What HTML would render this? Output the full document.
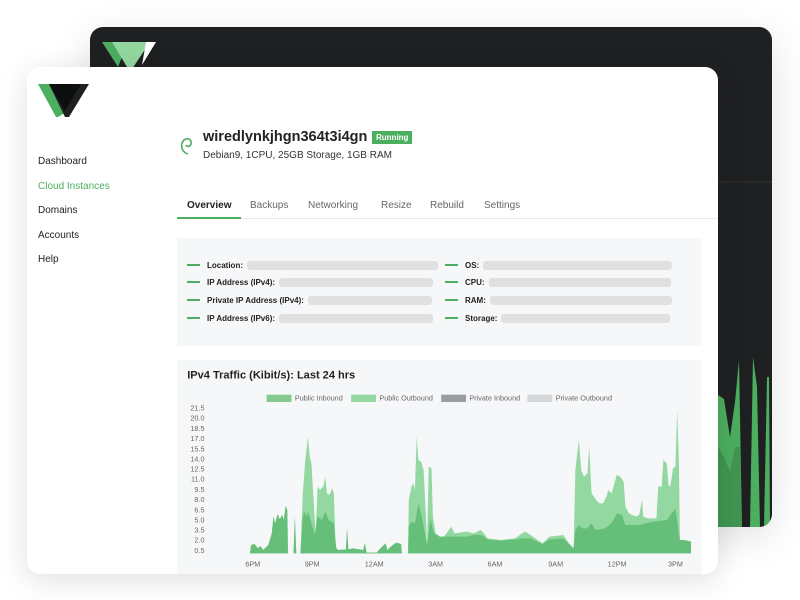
<!DOCTYPE html>
<html><head><meta charset="utf-8"><style>
*{margin:0;padding:0;box-sizing:border-box}
body{width:800px;height:600px;background:#fff;position:relative;overflow:hidden;font-family:"Liberation Sans",sans-serif;color:#222}
.dark{position:absolute;left:90px;top:27px;width:682px;height:500px;background:#1f2022;border-radius:13px;box-shadow:0 10px 40px rgba(0,0,0,.12);overflow:hidden}
.white{position:absolute;left:27px;top:67px;width:691px;height:507px;background:#fff;border-radius:13px;box-shadow:0 6px 30px rgba(0,0,0,.13);overflow:hidden}
.nav{position:absolute;left:11px;font-size:10px;color:#222}
.panel{position:absolute;left:150px;width:525px;background:#f6f7f9}
.row{position:absolute;font-size:8px;font-weight:bold;color:#222;display:flex;align-items:center;height:10px}
.row .d{width:13px;height:1.5px;background:#4cae5f;margin-right:7px}
.row .b{height:9px;background:#e0e0e0;border-radius:3px;margin-left:4px}
.tab{position:absolute;top:133px;font-size:10px;color:#666}
</style></head><body>
<div class="dark">
 <svg width="682" height="500" style="position:absolute;left:0;top:0">
  <polygon points="12,15 38,15 28,40" fill="#4cae5f"/>
  <polygon points="22,15 60,15 40,45" fill="#93d8a0"/>
  <polygon points="56,15 66,15 52,38" fill="#fff"/>
  <line x1="620" y1="155" x2="682" y2="155" stroke="#333" stroke-width="1"/>
  <polygon points="628,500 628,368 634,372 640,410 645,375 649,333 652,500 660,500 663,330 667,360 670,500 674,500 677,350 679,350 680,500" fill="#4cae5f"/>
  <polygon points="628,420 634,430 640,445 645,420 650,420 652,500 628,500" fill="#3d8a4c" opacity=".7"/>
 </svg>
</div>
<div class="white">
 <svg width="60" height="40" style="position:absolute;left:10px;top:14px">
  <polygon points="1,3 20,3 31,30 21,36 19,36" fill="#4cae5f"/>
  <polygon points="12,3 52,3 32,36 28,36" fill="#1f2022"/>
  <polygon points="12,3 44,3 28,30" fill="#0c0f0d"/>
 </svg>
 <div class="nav" style="top:89px">Dashboard</div>
 <div class="nav" style="top:114px;color:#4cae5f">Cloud Instances</div>
 <div class="nav" style="top:138px">Domains</div>
 <div class="nav" style="top:163px">Accounts</div>
 <div class="nav" style="top:187px">Help</div>
 <svg width="16" height="24" style="position:absolute;left:151px;top:67px"><path d="M10 20 C3 18 2 10 6 6 C10 3 14 6 13 10 C12 13 9 13 8 11" fill="none" stroke="#4cae5f" stroke-width="1.6"/></svg>
 <div style="position:absolute;left:176px;top:62px;font-size:14.5px;font-weight:bold;color:#222">wiredlynkjhgn364t3i4gn</div>
 <div style="position:absolute;left:345px;top:64px;background:#4cae5f;color:#fff;font-size:8px;font-weight:bold;padding:2px 4px">Running</div>
 <div style="position:absolute;left:176px;top:83px;font-size:10px;color:#333">Debian9, 1CPU, 25GB Storage, 1GB RAM</div>
 <div class="tab" style="left:160px;color:#222;font-weight:bold">Overview</div>
 <div class="tab" style="left:223px">Backups</div>
 <div class="tab" style="left:281px">Networking</div>
 <div class="tab" style="left:354px">Resize</div>
 <div class="tab" style="left:403px">Rebuild</div>
 <div class="tab" style="left:457px">Settings</div>
 <div style="position:absolute;left:150px;top:151px;width:541px;height:1px;background:#e8e8e8"></div>
 <div style="position:absolute;left:150px;top:150px;width:64px;height:2px;background:#4cae5f"></div>
 <div class="panel" style="top:171px;height:108px">
  <div class="row" style="left:10px;top:22px"><span class="d"></span>Location:<span class="b" style="width:191px"></span></div>
  <div class="row" style="left:10px;top:39px"><span class="d"></span>IP Address (IPv4):<span class="b" style="width:154px"></span></div>
  <div class="row" style="left:10px;top:57px"><span class="d"></span>Private IP Address (IPv4):<span class="b" style="width:124px"></span></div>
  <div class="row" style="left:10px;top:75px"><span class="d"></span>IP Address (IPv6):<span class="b" style="width:154px"></span></div>
  <div class="row" style="left:268px;top:22px"><span class="d"></span>OS:<span class="b" style="width:189px"></span></div>
  <div class="row" style="left:268px;top:39px"><span class="d"></span>CPU:<span class="b" style="width:182px"></span></div>
  <div class="row" style="left:268px;top:57px"><span class="d"></span>RAM:<span class="b" style="width:182px"></span></div>
  <div class="row" style="left:268px;top:75px"><span class="d"></span>Storage:<span class="b" style="width:169px"></span></div>
 </div>
 <div class="panel" style="top:293px;height:220px"></div>
</div>
<svg width="800" height="600" style="position:absolute;left:0;top:0">
 <g transform="translate(170,360) scale(0.345,0.3333)">
  <text x="50" y="55" font-size="32" font-weight="bold" fill="#222" font-family="Liberation Sans">IPv4 Traffic (Kibit/s): Last 24 hrs</text>
  <g font-family="Liberation Sans" font-size="21" fill="#666">
   <rect x="280" y="104" width="72" height="22" fill="#84c98f"/><text x="362" y="122">Public Inbound</text>
   <rect x="525" y="104" width="72" height="22" fill="#93d8a0"/><text x="607" y="122">Public Outbound</text>
   <rect x="786" y="104" width="72" height="22" fill="#9a9ea3"/><text x="868" y="122">Private Inbound</text>
   <rect x="1036" y="104" width="72" height="22" fill="#d4d6d8"/><text x="1118" y="122">Private Outbound</text>
   <g text-anchor="end">
    <text x="100" y="152">21.5</text><text x="100" y="182">20.0</text><text x="100" y="213">18.5</text><text x="100" y="243">17.0</text><text x="100" y="274">15.5</text><text x="100" y="304">14.0</text><text x="100" y="335">12.5</text><text x="100" y="365">11.0</text><text x="100" y="396">9.5</text><text x="100" y="426">8.0</text><text x="100" y="457">6.5</text><text x="100" y="487">5.0</text><text x="100" y="518">3.5</text><text x="100" y="548">2.0</text><text x="100" y="579">0.5</text>
   </g>
   <g text-anchor="middle">
    <text x="240" y="620">6PM</text><text x="412" y="620">9PM</text><text x="592" y="620">12AM</text><text x="770" y="620">3AM</text><text x="942" y="620">6AM</text><text x="1118" y="620">9AM</text><text x="1296" y="620">12PM</text><text x="1465" y="620">3PM</text>
   </g>
  </g>
  <polygon fill="#93d8a0" points="232,580 235,555 245,552 255,565 262,558 270,570 285,555 295,520 300,470 305,490 312,462 318,478 325,465 330,480 335,438 340,450 342,580 358,580 362,470 366,580 378,580 385,400 392,300 400,230 405,290 410,310 415,400 422,520 428,380 435,390 445,378 450,350 455,400 462,405 470,385 475,400 480,560 487,570 510,568 513,505 517,568 530,565 560,570 565,550 570,578 600,578 605,570 625,550 630,570 640,560 655,548 670,552 672,580 690,580 692,420 700,380 705,370 710,390 715,230 720,300 728,305 735,330 740,430 745,555 750,320 758,325 762,470 770,520 790,535 805,515 815,500 825,520 860,515 880,520 900,510 910,520 920,535 960,540 1000,535 1020,520 1030,515 1045,525 1080,550 1100,530 1140,525 1160,555 1170,565 1175,330 1185,240 1192,330 1200,350 1210,340 1215,260 1222,400 1235,420 1245,430 1255,430 1265,410 1270,390 1280,400 1295,345 1305,350 1315,365 1320,440 1330,460 1340,465 1350,470 1360,465 1368,420 1372,470 1385,475 1410,475 1415,380 1425,380 1430,300 1440,310 1445,375 1450,380 1458,325 1465,320 1470,150 1475,300 1478,540 1490,540 1510,545 1510,580"/>
  <polygon fill="#66bf78" points="232,580 235,555 245,552 255,565 262,558 270,570 285,555 295,520 300,470 305,490 312,462 318,478 325,465 330,480 335,438 340,450 342,580 358,580 362,470 366,580 378,580 385,470 390,455 395,470 400,455 410,490 420,525 428,470 440,480 450,455 460,480 475,490 482,565 487,570 510,568 513,505 517,568 530,565 560,570 565,550 570,578 600,578 605,570 625,550 630,570 640,560 655,548 670,552 672,580 690,580 692,500 700,485 710,490 720,430 730,470 745,555 755,475 765,520 780,530 800,530 825,530 860,530 880,525 900,525 910,530 920,538 960,542 1000,538 1020,535 1045,535 1080,552 1100,538 1140,535 1160,555 1170,565 1175,510 1185,495 1195,505 1210,505 1220,490 1235,510 1260,505 1280,490 1295,460 1310,465 1320,495 1360,495 1400,485 1440,480 1465,445 1475,520 1478,540 1490,540 1510,545 1510,580"/>
 </g>
</svg>
</body></html>
